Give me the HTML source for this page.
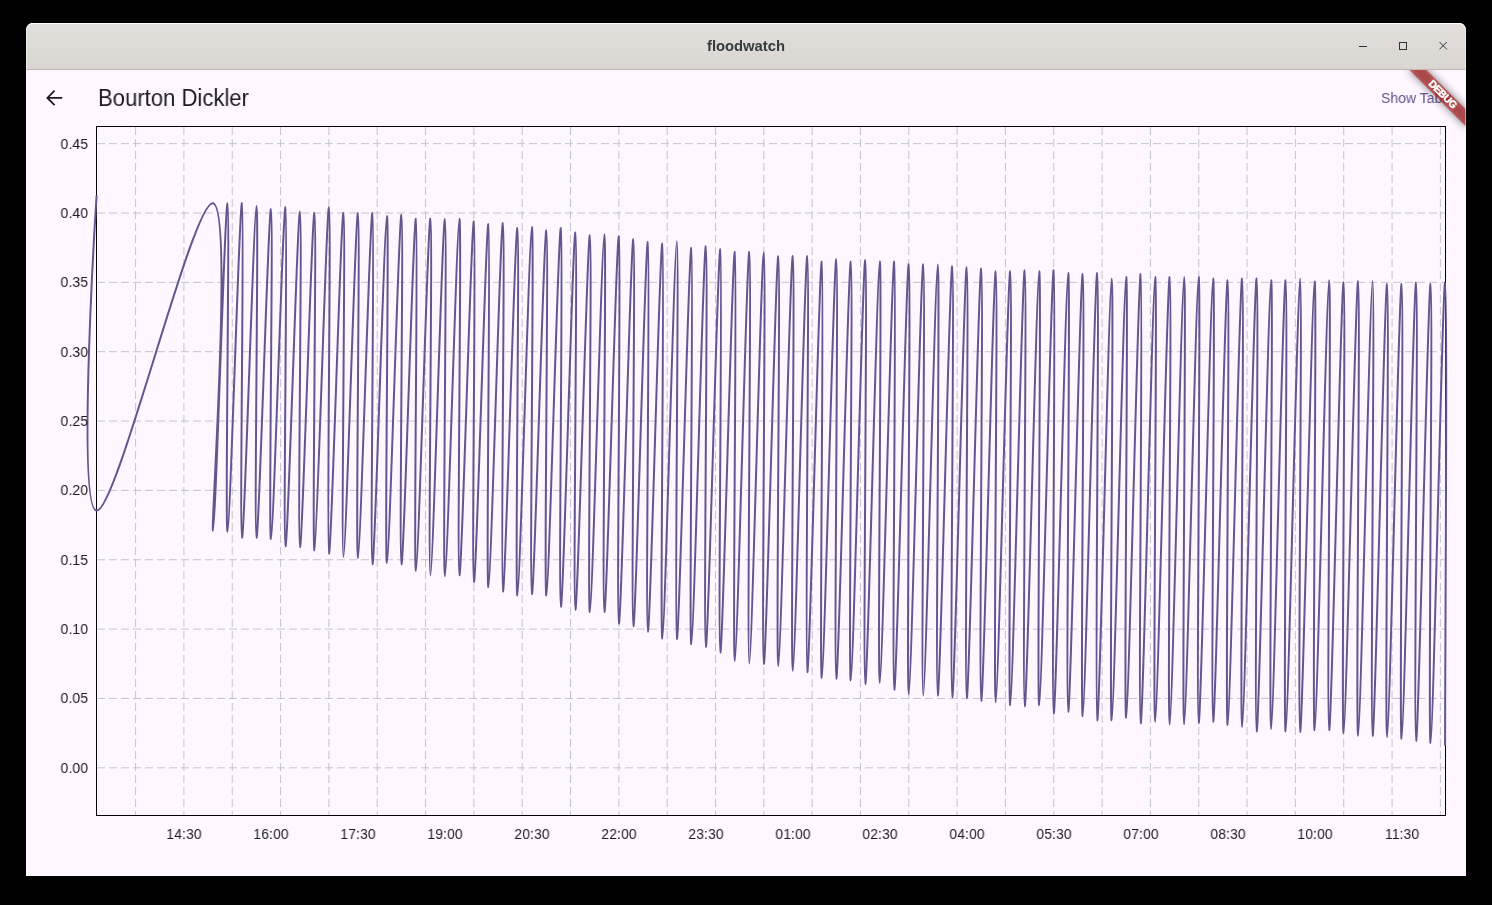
<!DOCTYPE html>
<html><head><meta charset="utf-8">
<style>
html,body{margin:0;padding:0;background:#000;width:1492px;height:905px;overflow:hidden}
body{position:relative;font-family:"Liberation Sans",sans-serif}
#win{position:absolute;left:26px;top:23px;width:1440px;height:853px;border-radius:7px 7px 0 0;overflow:hidden;background:#fef7ff}
#tb{position:absolute;left:0;top:0;width:1440px;height:46px;background:linear-gradient(#e1dedb,#dad7d3);border-bottom:1px solid #bfb8b1;box-sizing:border-box;height:47px}
#tb .title{will-change:transform;position:absolute;left:-0.5px;width:1440px;top:14px;text-align:center;font-weight:bold;font-size:14.8px;color:#363b3d;line-height:18px}
#app{position:absolute;left:0;top:47px;width:1440px;height:806px;overflow:hidden;background:#fef7ff}
.yl{will-change:transform;position:absolute;left:27.8px;width:60px;text-align:right;font-size:15.5px;line-height:16px;color:#1d1b20;transform:scale(0.91,1);transform-origin:right 8px}
.xl{will-change:transform;position:absolute;top:825.8px;width:60px;text-align:center;font-size:15.5px;line-height:16px;color:#1d1b20;transform:scale(0.91,1);transform-origin:50% 13px}
#ttl{will-change:transform;position:absolute;left:97.6px;top:83.5px;font-size:23px;line-height:28px;transform:scaleX(0.96);transform-origin:left center;color:#1d1b20}
#show{will-change:transform;position:absolute;left:1381px;top:88px;font-size:15.3px;line-height:20px;transform:scaleX(0.915);transform-origin:left center;color:#65558f;white-space:nowrap}
#banner{position:absolute;left:1402px;top:88px;width:80px;height:12px;transform:rotate(45deg);background:rgba(183,28,28,0.627);color:#fff;font-size:10.2px;font-weight:bold;line-height:12px;text-align:center;-webkit-text-stroke:0.45px #fff;letter-spacing:-0.35px;text-indent:1.5px}
#bshadow{position:absolute;left:1402px;top:88px;width:80px;height:12px;transform:rotate(45deg);background:rgba(0,0,0,0.5);filter:blur(4px)}
svg{position:absolute;left:0;top:0}
#frame{position:absolute;left:26px;top:23px;width:1440px;height:853px;box-sizing:border-box;border-radius:7px 7px 0 0;border:1px solid rgba(255,255,255,0.45);border-top-color:rgba(255,255,255,0.95)}
</style></head><body>
<div id="win">
  <div id="tb"><div class="title">floodwatch</div>
    <svg width="1440" height="46" style="left:0;top:0">
      <g stroke="#2e3436" fill="none" stroke-width="1">
        <path d="M1333 23.5H1341"/>
        <rect x="1373.5" y="19.5" width="7" height="7"/>
        <path d="M1413.5 19L1420.8 26.3M1420.8 19L1413.5 26.3"/>
      </g>
    </svg>
  </div>
  <div id="app">
    <svg width="1440" height="806" viewBox="26 70 1440 806">
      <path d="M97.00 767.80H1445.00M97.00 698.45H1445.00M97.00 629.10H1445.00M97.00 559.75H1445.00M97.00 490.40H1445.00M97.00 421.05H1445.00M97.00 351.70H1445.00M97.00 282.35H1445.00M97.00 213.00H1445.00M97.00 143.65H1445.00M135.60 127.00V815.00M183.93 127.00V815.00M232.25 127.00V815.00M280.58 127.00V815.00M328.90 127.00V815.00M377.23 127.00V815.00M425.55 127.00V815.00M473.88 127.00V815.00M522.20 127.00V815.00M570.52 127.00V815.00M618.85 127.00V815.00M667.18 127.00V815.00M715.50 127.00V815.00M763.83 127.00V815.00M812.15 127.00V815.00M860.48 127.00V815.00M908.80 127.00V815.00M957.13 127.00V815.00M1005.45 127.00V815.00M1053.78 127.00V815.00M1102.10 127.00V815.00M1150.42 127.00V815.00M1198.75 127.00V815.00M1247.08 127.00V815.00M1295.40 127.00V815.00M1343.72 127.00V815.00M1392.05 127.00V815.00M1440.38 127.00V815.00" stroke="#b0b9c4" stroke-width="1" stroke-dasharray="8 4" fill="none" opacity="0.8"/>
      <rect x="96.5" y="126.5" width="1349" height="689" fill="none" stroke="#000" stroke-width="1"/>
      <path d="M96.60 195.40C96.60 195.40 76.23 509.22 96.60 510.60C116.97 511.98 192.63 199.78 213.00 203.30C233.37 206.82 210.46 530.70 213.00 530.70C215.54 530.70 224.96 203.12 227.50 203.30C230.03 203.48 224.96 531.74 227.50 531.70C230.03 531.67 239.45 202.05 241.99 203.10C244.53 204.15 239.45 537.18 241.99 537.70C244.53 538.23 253.95 206.10 256.49 206.10C259.02 206.10 253.95 537.21 256.49 537.70C259.02 538.19 268.44 208.66 270.98 208.90C273.52 209.15 268.44 539.38 270.98 539.10C273.52 538.82 282.94 206.06 285.48 207.30C288.01 208.54 282.94 545.45 285.48 546.20C288.01 546.95 297.43 211.42 299.97 211.60C302.51 211.78 297.43 546.97 299.97 547.20C302.51 547.43 311.93 212.38 314.46 212.90C317.00 213.43 311.93 551.13 314.46 550.20C317.00 549.27 326.42 207.04 328.96 207.60C331.50 208.16 326.42 552.45 328.96 553.40C331.50 554.35 340.92 212.41 343.45 213.00C345.99 213.59 340.92 556.78 343.45 556.80C345.99 556.82 355.41 212.85 357.95 213.10C360.49 213.34 355.41 558.20 357.95 558.20C360.49 558.20 369.91 212.05 372.44 213.10C374.98 214.15 369.91 563.68 372.44 564.20C374.98 564.73 384.40 216.34 386.94 216.10C389.48 215.85 384.40 563.03 386.94 562.80C389.48 562.57 398.90 214.56 401.44 214.80C403.97 215.05 398.90 563.50 401.44 564.20C403.97 564.90 413.39 217.63 415.93 218.80C418.47 219.97 413.39 570.93 415.93 570.90C418.47 570.87 427.89 217.83 430.42 218.60C432.96 219.37 427.89 575.25 430.42 575.30C432.96 575.35 442.38 218.72 444.92 218.90C447.46 219.08 442.38 576.32 444.92 576.30C447.46 576.28 456.88 218.98 459.41 218.80C461.95 218.62 456.88 574.86 459.41 575.30C461.95 575.74 471.37 220.15 473.91 221.30C476.45 222.46 471.37 581.41 473.91 581.90C476.45 582.39 485.87 223.16 488.40 224.10C490.94 225.04 485.87 587.47 488.40 587.30C490.94 587.12 500.36 222.35 502.90 223.10C505.44 223.85 500.36 590.73 502.90 591.60C505.44 592.48 514.86 227.40 517.39 228.10C519.93 228.80 514.86 595.77 517.39 595.60C519.93 595.43 529.35 227.34 531.89 227.10C534.43 226.85 529.35 593.66 531.89 594.20C534.43 594.74 543.85 229.95 546.38 230.20C548.92 230.44 543.85 595.97 546.38 595.60C548.92 595.23 558.34 226.16 560.88 228.10C563.42 230.04 558.34 605.91 560.88 606.70C563.42 607.49 572.84 232.07 575.38 232.60C577.91 233.12 572.84 609.25 575.38 609.70C577.91 610.16 587.33 234.78 589.87 235.20C592.41 235.62 587.33 612.27 589.87 612.10C592.41 611.93 601.83 234.20 604.37 234.20C606.90 234.20 601.83 611.72 604.37 612.10C606.90 612.49 616.32 234.35 618.86 236.40C621.40 238.45 616.32 623.31 618.86 623.80C621.40 624.29 630.82 238.78 633.36 239.20C635.89 239.62 630.82 625.71 633.36 626.20C635.89 626.69 645.31 241.02 647.85 242.00C650.39 242.98 645.31 631.52 647.85 631.80C650.39 632.08 659.81 242.43 662.35 243.60C664.88 244.77 659.81 638.92 662.35 638.50C664.88 638.08 674.30 241.13 676.84 241.20C679.38 241.27 674.30 637.73 676.84 638.90C679.38 640.07 688.80 246.96 691.34 247.90C693.87 248.84 688.80 644.60 691.34 644.30C693.87 644.00 703.29 245.74 705.83 246.20C708.37 246.66 703.29 646.36 705.83 646.90C708.37 647.44 717.79 248.32 720.33 249.30C722.86 250.28 717.79 652.04 720.33 652.50C722.86 652.96 732.28 250.41 734.82 251.90C737.36 253.39 732.28 661.00 734.82 661.00C737.36 661.00 746.78 251.48 749.31 251.90C751.85 252.32 746.78 663.33 749.31 663.40C751.85 663.47 761.27 252.19 763.81 252.30C766.35 252.41 761.27 663.32 763.81 664.00C766.35 664.68 775.77 255.85 778.30 256.20C780.84 256.55 775.77 666.02 778.30 666.00C780.84 665.98 790.26 255.28 792.80 256.10C795.34 256.92 790.26 670.70 792.80 670.70C795.34 670.70 804.76 255.86 807.29 256.10C809.83 256.35 804.76 671.14 807.29 672.10C809.83 673.06 819.25 260.60 821.79 261.60C824.33 262.60 819.25 678.22 821.79 677.80C824.33 677.38 833.75 259.02 836.28 259.20C838.82 259.38 833.75 678.38 836.28 678.80C838.82 679.22 848.24 261.32 850.78 261.60C853.32 261.88 848.24 680.64 850.78 680.40C853.32 680.15 862.74 259.53 865.27 260.20C867.81 260.87 862.74 683.96 865.27 684.20C867.81 684.45 877.23 261.85 879.77 261.60C882.31 261.36 877.23 682.80 879.77 682.80C882.31 682.80 891.73 260.38 894.26 261.60C896.80 262.83 891.73 689.34 894.26 689.80C896.80 690.25 906.22 263.43 908.76 264.20C911.30 264.97 906.22 694.20 908.76 694.20C911.30 694.20 920.72 263.97 923.25 264.20C925.79 264.43 920.72 695.43 923.25 695.50C925.79 695.57 935.21 264.60 937.75 264.60C940.29 264.60 935.21 695.22 937.75 695.50C940.29 695.78 949.71 265.88 952.25 266.20C954.78 266.51 949.71 697.12 952.25 697.30C954.78 697.47 964.20 267.02 966.74 267.20C969.28 267.38 964.20 698.05 966.74 698.30C969.28 698.54 978.70 268.15 981.24 268.60C983.77 269.06 978.70 700.44 981.24 700.90C983.77 701.36 993.19 270.95 995.73 271.20C998.27 271.44 993.19 702.30 995.73 702.30C998.27 702.30 1007.69 270.68 1010.22 271.20C1012.76 271.72 1007.69 705.47 1010.22 705.30C1012.76 705.12 1022.18 269.99 1024.72 270.20C1027.26 270.41 1022.18 706.33 1024.72 706.50C1027.26 706.67 1036.68 271.41 1039.21 271.20C1041.75 270.99 1036.68 705.47 1039.21 705.30C1041.75 705.12 1051.17 268.75 1053.71 270.20C1056.25 271.65 1051.17 713.09 1053.71 713.60C1056.25 714.11 1065.67 273.38 1068.20 273.10C1070.74 272.82 1065.67 711.83 1068.20 712.00C1070.74 712.17 1080.16 273.37 1082.70 274.10C1085.24 274.84 1080.16 716.38 1082.70 716.20C1085.24 716.03 1094.66 272.37 1097.19 273.10C1099.73 273.84 1094.66 719.45 1097.19 720.40C1099.73 721.35 1109.15 278.50 1111.69 278.50C1114.23 278.50 1109.15 720.64 1111.69 720.40C1114.23 720.15 1123.65 277.56 1126.18 277.10C1128.72 276.65 1123.65 718.32 1126.18 717.80C1128.72 717.27 1138.14 273.12 1140.68 274.10C1143.22 275.08 1138.14 722.88 1140.68 723.40C1143.22 723.92 1152.64 277.38 1155.17 277.10C1157.71 276.82 1152.64 721.80 1155.17 721.80C1157.71 721.80 1167.13 276.63 1169.67 277.10C1172.21 277.57 1167.13 724.50 1169.67 724.50C1172.21 724.50 1181.63 277.10 1184.16 277.10C1186.70 277.10 1181.63 724.50 1184.16 724.50C1186.70 724.50 1196.12 277.33 1198.66 277.10C1201.20 276.87 1196.12 722.96 1198.66 723.20C1201.20 723.45 1210.62 278.75 1213.15 278.50C1215.69 278.25 1210.62 721.50 1213.15 721.80C1215.69 722.10 1225.11 279.66 1227.65 280.20C1230.19 280.74 1225.11 725.20 1227.65 724.90C1230.19 724.60 1239.61 278.15 1242.14 278.50C1244.68 278.85 1239.61 726.90 1242.14 726.90C1244.68 726.90 1254.10 277.69 1256.64 278.50C1259.18 279.31 1254.10 731.20 1256.64 731.50C1259.18 731.80 1268.60 280.65 1271.13 280.20C1273.67 279.75 1268.60 728.90 1271.13 728.90C1273.67 728.90 1283.09 279.75 1285.63 280.20C1288.17 280.65 1283.09 731.80 1285.63 731.50C1288.17 731.20 1297.59 278.43 1300.12 278.50C1302.66 278.57 1297.59 731.36 1300.12 731.90C1302.66 732.44 1312.08 281.88 1314.62 281.60C1317.16 281.32 1312.08 730.54 1314.62 730.30C1317.16 730.05 1326.58 280.20 1329.12 280.20C1331.65 280.20 1326.58 729.93 1329.12 730.30C1331.65 730.67 1341.07 281.81 1343.61 282.30C1346.15 282.79 1341.07 733.27 1343.61 733.10C1346.15 732.93 1355.57 280.85 1358.11 281.30C1360.64 281.75 1355.57 735.74 1358.11 735.70C1360.64 735.67 1370.06 281.07 1372.60 281.10C1375.14 281.13 1370.06 735.41 1372.60 735.90C1375.14 736.39 1384.56 283.71 1387.10 283.90C1389.63 284.09 1384.56 737.00 1387.10 737.00C1389.63 737.00 1399.05 283.58 1401.59 283.90C1404.13 284.21 1399.05 739.04 1401.59 738.80C1404.13 738.55 1413.55 282.12 1416.09 282.50C1418.62 282.88 1413.55 740.75 1416.09 741.00C1418.62 741.25 1428.04 283.55 1430.58 283.90C1433.12 284.25 1428.04 743.25 1430.58 743.00C1433.12 742.75 1442.54 282.01 1445.08 282.50C1447.61 282.99 1445.08 664.72 1445.08 745.80" fill="none" stroke="#65558f" stroke-width="2"/>
      <path d="M62.2 97.9H47.6M54.6 90.7L47.4 97.9L54.6 105.1" stroke="#1d1b20" stroke-width="1.8" fill="none" stroke-linecap="butt"/>
    </svg>
    <div id="L" style="position:absolute;left:-26px;top:-70px;width:1492px;height:905px"><div class="yl" style="top:759.6px">0.00</div><div class="yl" style="top:690.2px">0.05</div><div class="yl" style="top:620.9px">0.10</div><div class="yl" style="top:551.5px">0.15</div><div class="yl" style="top:482.2px">0.20</div><div class="yl" style="top:412.9px">0.25</div><div class="yl" style="top:343.5px">0.30</div><div class="yl" style="top:274.1px">0.35</div><div class="yl" style="top:204.8px">0.40</div><div class="yl" style="top:135.5px">0.45</div>
    <div class="xl" style="left:153.6px">14:30</div><div class="xl" style="left:240.6px">16:00</div><div class="xl" style="left:327.6px">17:30</div><div class="xl" style="left:414.7px">19:00</div><div class="xl" style="left:501.7px">20:30</div><div class="xl" style="left:588.7px">22:00</div><div class="xl" style="left:675.7px">23:30</div><div class="xl" style="left:762.7px">01:00</div><div class="xl" style="left:849.7px">02:30</div><div class="xl" style="left:936.7px">04:00</div><div class="xl" style="left:1023.7px">05:30</div><div class="xl" style="left:1110.8px">07:00</div><div class="xl" style="left:1197.8px">08:30</div><div class="xl" style="left:1284.8px">10:00</div><div class="xl" style="left:1371.8px">11:30</div>
    <div id="ttl">Bourton Dickler</div>
    <div id="show">Show Table</div>
    <div id="bshadow"></div><div id="banner">DEBUG</div></div>
  </div>
</div>
<div id="frame"></div>
</body></html>
